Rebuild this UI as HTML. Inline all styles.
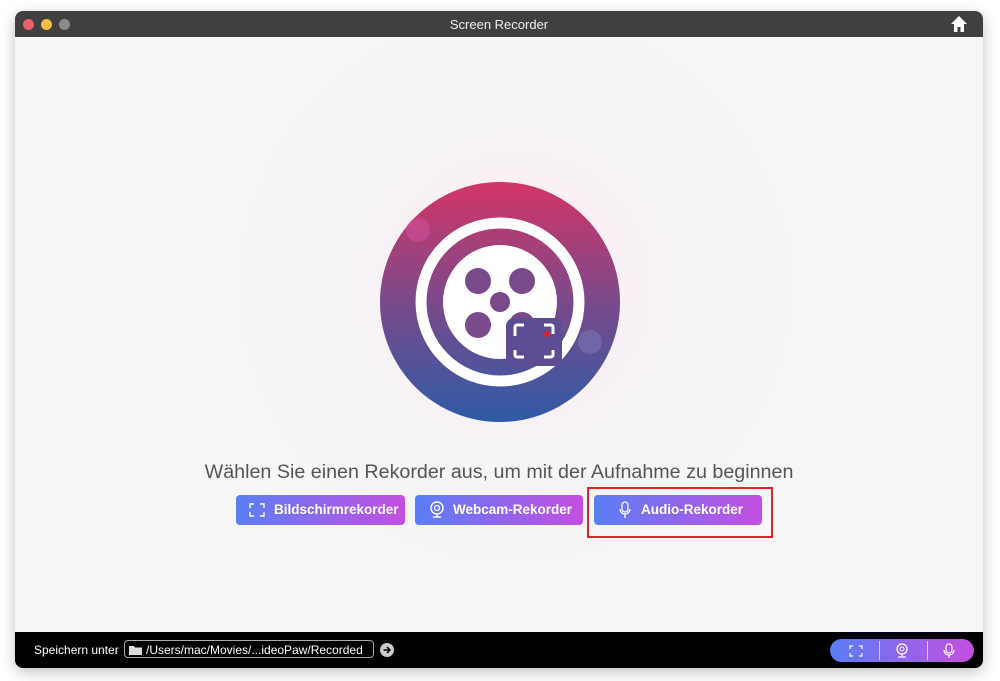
<!DOCTYPE html>
<html><head><meta charset="utf-8"><style>
body{margin:0;width:1000px;height:681px;background:#fff;font-family:"Liberation Sans",sans-serif;position:relative;overflow:hidden}
.win{position:absolute;left:15px;top:11px;width:968px;height:657px;border-radius:8px;overflow:hidden;box-shadow:0 4px 14px rgba(0,0,0,.25);background:#f6f6f6}
.title{position:absolute;left:0;top:0;width:100%;height:26px;background:#404040;color:#eee;font-size:13px;text-align:center;line-height:27px}
.dot{position:absolute;top:8px;width:11px;height:11px;border-radius:50%}
.content{position:absolute;left:0;top:26px;width:100%;height:595px;background:radial-gradient(circle at 500px 250px,#fbe9ef 0,#f6f3f6 160px,#f6f6f6 300px)}
.bottom{position:absolute;left:0;top:621px;width:100%;height:36px;background:#000}
.btn{position:absolute;top:458px;height:30px;border-radius:4px;background:linear-gradient(90deg,#5a7ef5,#c44ee0);color:#fff;font-size:13.5px;font-weight:bold;line-height:30px;box-sizing:border-box}
.h{position:absolute;top:424px;left:0;width:968px;text-align:center;font-size:19.7px;color:#555}
</style></head><body>
<div class="win">
 <div class="title">Screen Recorder
  <div class="dot" style="left:8px;background:#ec5f6a"></div>
  <div class="dot" style="left:26px;background:#f3bd3f"></div>
  <div class="dot" style="left:44px;background:#8a8a8a"></div>
  <svg style="position:absolute;right:15px;top:4px" width="18" height="18" viewBox="0 0 18 18"><path d="M9 1L1 9h3v8h3.5v-5h3v5H14V9h3z" fill="#fff"/></svg>
 </div>
 <div class="content">
  <svg style="position:absolute;left:365px;top:145px" width="240" height="240" viewBox="0 0 240 240">
   <defs><linearGradient id="g" x1="0" y1="0" x2="0" y2="1"><stop offset="0" stop-color="#d33466"/><stop offset=".5" stop-color="#7a4a8a"/><stop offset="1" stop-color="#2f5aa6"/></linearGradient></defs>
   <circle cx="120" cy="120" r="120" fill="url(#g)"/>
   <circle cx="38" cy="48" r="12" fill="#e25ab0" opacity=".4"/>
   <circle cx="210" cy="160" r="12" fill="#8a8ac8" opacity=".4"/>
   <circle cx="120" cy="120" r="79" fill="none" stroke="#fff" stroke-width="11"/>
   <circle cx="120" cy="120" r="57" fill="#fff"/>
   <g fill="#7a4a8a"><circle cx="98" cy="99" r="13"/><circle cx="142" cy="99" r="13"/><circle cx="120" cy="120" r="10"/><circle cx="98" cy="143" r="13"/><circle cx="142" cy="143" r="13"/></g>
   <rect x="126" y="136" width="56" height="48" rx="8" fill="#5e4c92"/>
   <path d="M135 154v-9a2 2 0 0 1 2-2h7M164 143h7a2 2 0 0 1 2 2v7M173 168v5a2 2 0 0 1-2 2h-7M144 175h-7a2 2 0 0 1-2-2v-5" stroke="#fff" stroke-width="3" fill="none"/>
   <circle cx="167" cy="152" r="3" fill="#e02030"/>
  </svg>
  <div class="h">Wählen Sie einen Rekorder aus, um mit der Aufnahme zu beginnen</div>
  <div class="btn" style="left:221px;width:169px;padding-left:38px">Bildschirmrekorder
   <svg style="position:absolute;left:13px;top:8px" width="16" height="14"><path d="M1 5V1h4M11 1h4v4M15 9v4h-4M5 13H1V9" stroke="#fff" stroke-width="1.4" fill="none"/></svg></div>
  <div class="btn" style="left:400px;width:168px;padding-left:38px">Webcam-Rekorder
   <svg style="position:absolute;left:15px;top:6px" width="14" height="18"><circle cx="7" cy="7" r="6" stroke="#fff" stroke-width="1.4" fill="none"/><circle cx="7" cy="7" r="2.5" stroke="#fff" stroke-width="1.3" fill="none"/><path d="M3 16h8M7 13v3" stroke="#fff" stroke-width="1.4"/></svg></div>
  <div class="btn" style="left:579px;width:168px;padding-left:47px">Audio-Rekorder
   <svg style="position:absolute;left:25px;top:6px" width="12" height="18"><rect x="3" y="1" width="6" height="10" rx="3" stroke="#fff" stroke-width="1.3" fill="none"/><path d="M1 8a5 5 0 0 0 10 0M6 13v4" stroke="#fff" stroke-width="1.3" fill="none"/></svg></div>
  <div style="position:absolute;left:572px;top:450px;width:182px;height:47px;border:2px solid #e0242e"></div>
 </div>
 <div class="bottom">
  <span style="position:absolute;left:19px;top:11px;color:#fff;font-size:12px">Speichern unter</span>
  <div style="position:absolute;left:109px;top:8px;width:250px;height:18px;border:1px solid #aaa;border-radius:4px;color:#fff;font-size:12px;line-height:18px;padding-left:21px;box-sizing:border-box">/Users/mac/Movies/...ideoPaw/Recorded
   <svg style="position:absolute;left:4px;top:4px" width="13" height="10"><path d="M0 1h5l1 1.5h7V10H0z" fill="#ddd"/></svg></div>
  <svg style="position:absolute;left:365px;top:11px" width="14" height="14"><circle cx="7" cy="7" r="7" fill="#ccc"/><path d="M3.5 7h6M7 4l3 3-3 3" stroke="#000" stroke-width="1.5" fill="none"/></svg>
  <div style="position:absolute;left:815px;top:7px;width:144px;height:23px;border-radius:12px;background:linear-gradient(90deg,#5a7ef5,#c44ee0)">
   <div style="position:absolute;left:49px;top:2px;width:1px;height:19px;background:#cfc6f5"></div>
   <div style="position:absolute;left:97px;top:2px;width:1px;height:19px;background:#e0c6f5"></div>
   <svg style="position:absolute;left:19px;top:6px" width="14" height="12"><path d="M1 4V1h3M10 1h3v3M13 8v3h-3M4 11H1V8" stroke="#fff" stroke-width="1.2" fill="none"/></svg>
   <svg style="position:absolute;left:66px;top:4px" width="12" height="16"><circle cx="6" cy="6" r="5" stroke="#fff" stroke-width="1.2" fill="none"/><circle cx="6" cy="6" r="2" stroke="#fff" fill="none"/><path d="M2 14h8M6 11v3" stroke="#fff" stroke-width="1.2"/></svg>
   <svg style="position:absolute;left:113px;top:4px" width="12" height="16"><rect x="3" y="1" width="6" height="9" rx="3" stroke="#fff" stroke-width="1.2" fill="none"/><path d="M1 7a5 5 0 0 0 10 0M6 12v3" stroke="#fff" stroke-width="1.2" fill="none"/></svg>
  </div>
 </div>
</div>
</body></html>
